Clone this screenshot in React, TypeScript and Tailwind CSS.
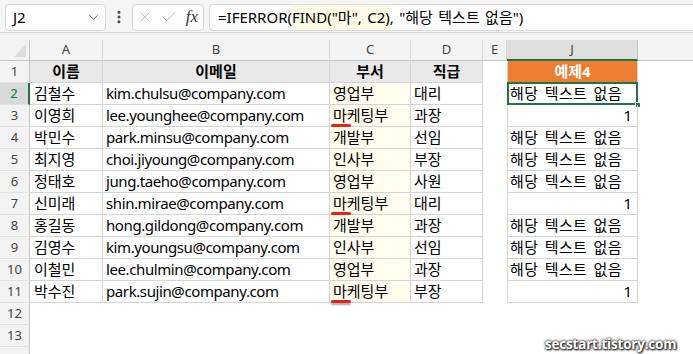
import { ChevronDown, EllipsisVertical, X, Check } from 'lucide-react'

const ROWS: [string, string, string, string, string][] = [
  ['김철수', 'kim.chulsu@company.com', '영업부', '대리', '해당 텍스트 없음'],
  ['이영희', 'lee.younghee@company.com', '마케팅부', '과장', '1'],
  ['박민수', 'park.minsu@company.com', '개발부', '선임', '해당 텍스트 없음'],
  ['최지영', 'choi.jiyoung@company.com', '인사부', '부장', '해당 텍스트 없음'],
  ['정태호', 'jung.taeho@company.com', '영업부', '사원', '해당 텍스트 없음'],
  ['신미래', 'shin.mirae@company.com', '마케팅부', '대리', '1'],
  ['홍길동', 'hong.gildong@company.com', '개발부', '과장', '해당 텍스트 없음'],
  ['김영수', 'kim.youngsu@company.com', '인사부', '선임', '해당 텍스트 없음'],
  ['이철민', 'lee.chulmin@company.com', '영업부', '과장', '해당 텍스트 없음'],
  ['박수진', 'park.sujin@company.com', '마케팅부', '부장', '1'],
]

const COLS = 'grid grid-cols-[30px_73px_227px_81px_72px_24px_131px_1fr]'
const CELL = 'h-[22px] flex items-center border-r border-b border-[#d4d4d4] whitespace-nowrap overflow-hidden'

function RowHead({ n, active }: { n?: number; active?: boolean }) {
  return (
    <div
      className={`h-[22px] flex items-center justify-center text-[13px] border-b border-[#e1e1e1] ${
        active
          ? 'bg-[#d9d9d9] text-[#217346] border-r-2 border-r-[#217346]'
          : 'bg-[#f3f3f3] text-[#444] border-r border-r-[#c6c6c6]'
      }`}
    >
      {n}
    </div>
  )
}

function DataRow({ n, row }: { n: number; row: [string, string, string, string, string] }) {
  const [name, email, dept, rank, result] = row
  const isNum = result === '1'
  return (
    <>
      <RowHead n={n} active={n === 2} />
      <div className={`${CELL} pl-[4px]`}>{name}</div>
      <div className={`${CELL} pl-[3px] tracking-[-0.4px]`}>{email}</div>
      <div className={`${CELL} pl-[3px] bg-[#fffdee] relative overflow-visible`}>
        {dept}
        {dept.startsWith('마') && (
          <span className="absolute left-[1px] bottom-[-1px] w-[20px] h-[3px] rounded-full bg-[#e8231c] shadow-[0_2px_2px_rgba(0,0,0,0.35)]" />
        )}
      </div>
      <div className={`${CELL} pl-[3px]`}>{rank}</div>
      <div />
      <div
        className={`${CELL} border-l relative overflow-visible ${
          isNum ? 'justify-end pr-[5px]' : 'pl-[2px] tracking-[0.4px] [word-spacing:2px]'
        }`}
      >
        {result}
        {n === 2 && (
          <>
            <span className="absolute left-[-1px] top-[-1px] right-[-1px] bottom-[-1px] border-2 border-[#217346]" />
            <span className="absolute right-[-4px] bottom-[-4px] w-[6px] h-[6px] bg-[#217346] border border-white" />
          </>
        )}
      </div>
      <div />
    </>
  )
}

export default function App() {
  const font = { fontFamily: '"Noto Sans", "Noto Sans CJK KR", sans-serif' }
  return (
    <div className="w-[693px] h-[354px] overflow-hidden relative bg-white text-black" style={font}>
      {/* formula bar */}
      <div className="h-[33px] bg-[#f5f5f5] border-b border-[#d6d6d6] flex items-center gap-[5px] pl-[5px] pt-[2px]">
        <div className="w-[101px] h-[27px] bg-white border border-[#dadada] rounded-[4px] flex items-center justify-between pl-[7px] pr-[4px] text-[15px]">
          <span>J2</span>
          <ChevronDown className="w-[15px] h-[15px] text-[#555]" strokeWidth={1.5} />
        </div>
        <EllipsisVertical className="w-[16px] h-[16px] text-[#444]" strokeWidth={2.5} />
        <div className="w-[72px] h-[27px] bg-white border border-[#dadada] rounded-[4px] flex items-center justify-between px-[4px]">
          <X className="w-[16px] h-[16px] text-[#b9b9b9]" strokeWidth={1.3} />
          <Check className="w-[18px] h-[18px] text-[#b9b9b9]" strokeWidth={1.3} />
          <span
            className="italic text-[17px] text-[#333] pr-[1px]"
            style={{ fontFamily: '"Liberation Serif", serif' }}
          >
            fx
          </span>
        </div>
        <div className="flex-1 h-[27px] bg-white border border-r-0 border-[#dadada] rounded-l-[4px] flex items-stretch pl-[8px] text-[15px] whitespace-nowrap [word-spacing:1.5px]">
          <span className="flex items-center">=IFERROR(</span>
          <span className="flex items-center bg-[#fdfbe6]">FIND("마", C2)</span>
          <span className="flex items-center">, "해당 텍스트 없음")</span>
        </div>
      </div>

      {/* grid */}
      <div className="bg-[#f3f3f3] h-[7px]" />
      <div className={`${COLS} text-[15px] [word-spacing:0.5px]`}>
        <div className="h-[21px] bg-[#f3f3f3] border-r border-b border-[#c6c6c6] relative">
          <svg className="absolute right-[3px] bottom-[3px]" width="12" height="13" viewBox="0 0 12 13">
            <polygon points="12,0 12,13 0,13" fill="#dcdcdc" />
          </svg>
        </div>
        {['A', 'B', 'C', 'D', 'E'].map((c) => (
          <div
            key={c}
            className="h-[21px] bg-[#f3f3f3] border-r border-b border-[#d6d6d6] border-b-[#c6c6c6] flex items-center justify-center text-[13px] text-[#444]"
          >
            {c}
          </div>
        ))}
        <div className="h-[21px] bg-[#dedede] border-r border-[#c6c6c6] border-b-2 border-b-[#217346] flex items-center justify-center text-[13px] text-[#444]">
          J
        </div>
        <div className="h-[21px] bg-[#f3f3f3] border-b border-[#c6c6c6]" />

        {/* header row */}
        <RowHead n={1} />
        {['이름', '이메일', '부서', '직급'].map((h) => (
          <div key={h} className={`${CELL} justify-center font-bold bg-[#e9e9e9]`}>
            {h}
          </div>
        ))}
        <div />
        <div className={`${CELL} border-l justify-center font-bold text-white bg-[#ed7d31] border-[#d4d4d4]`}>
          예제4
        </div>
        <div />

        {ROWS.map((r, i) => (
          <DataRow key={i} n={i + 2} row={r} />
        ))}

        {[12, 13].map((n) => (
          <div key={n} className="contents">
            <RowHead n={n} />
            <div className="col-span-7" />
          </div>
        ))}
        <RowHead />
        <div className="col-span-7" />
      </div>

      <div
        className="absolute left-[545px] top-[334px] text-[13.5px] font-bold text-white tracking-[-0.2px] [text-shadow:0_0_2px_#222,0_0_3px_#333,1px_1px_2px_#000]"
        style={{ fontFamily: '"Open Sans", sans-serif' }}
      >
        secstart.tistory.com
      </div>
    </div>
  )
}
